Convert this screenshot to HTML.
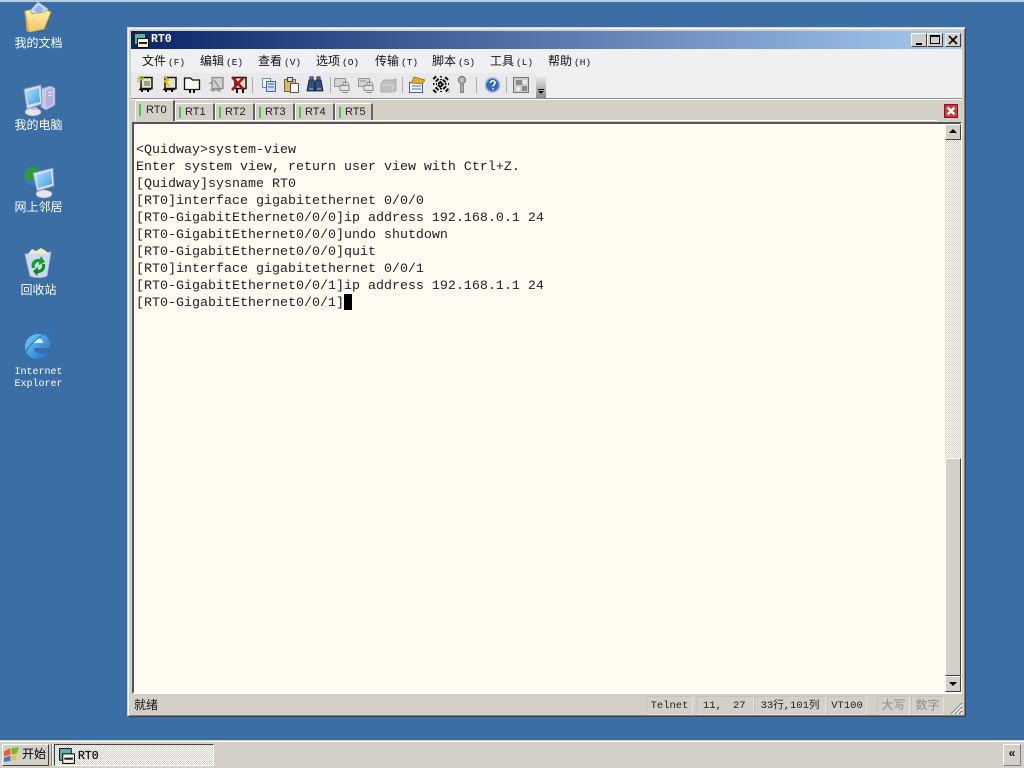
<!DOCTYPE html>
<html lang="zh"><head><meta charset="utf-8"><title>RT0</title>
<style>
*{box-sizing:border-box}
html,body{margin:0;padding:0;width:1024px;height:768px;overflow:hidden;background:#3a6ea5;font-family:"Liberation Sans","Noto Sans CJK SC",sans-serif;color:#000}
.a{position:absolute}
.dl{position:absolute;left:0;width:77px;text-align:center;color:#fff;font-size:12px;line-height:14px;white-space:nowrap}
.mono{font-family:"Liberation Mono","Noto Sans CJK SC",monospace}
.menu{position:absolute;top:53px;font-size:12px;line-height:16px;white-space:nowrap;color:#111}
.menu small{font-size:9.5px;font-family:"Liberation Mono",monospace;margin-left:2px}
.tab{position:absolute;top:103px;height:18px;width:40px;background:#d4d0c8;border-top:1px solid #fff;border-left:1px solid #fff;border-right:2px solid #666;font-size:11px;line-height:17px;padding-left:9px;color:#222}
.tab i{position:absolute;left:3px;top:3px;width:2px;height:11px;background:#4cc24c}
.term div{height:17px;white-space:pre}
.btn{position:absolute;width:16px;height:14px;background:#d4d0c8;border:1px solid;border-color:#fff #404040 #404040 #fff}
.st{position:absolute;top:696px;height:19px;border:1px solid;border-color:#c8c4bc #e4e2dc #e4e2dc #c8c4bc;font:10.5px/18px "Liberation Mono","Noto Sans CJK SC",monospace;white-space:nowrap;text-align:center;color:#222}
</style></head><body>
<svg width="0" height="0" class="a"><defs>
<linearGradient id="scr" x1="0" y1="0" x2="1" y2="1"><stop offset="0" stop-color="#b5e2fb"/><stop offset="1" stop-color="#3f9be8"/></linearGradient>
<linearGradient id="fol" x1="0" y1="0" x2="0" y2="1"><stop offset="0" stop-color="#fff0b0"/><stop offset="1" stop-color="#efc65c"/></linearGradient>
<linearGradient id="ie" x1="0" y1="0" x2="1" y2="1"><stop offset="0" stop-color="#74d0f6"/><stop offset="1" stop-color="#1b6cd0"/></linearGradient>
</defs></svg>
<div class="a" style="left:0;top:0;width:1024px;height:2px;background:#b9cbe2"></div>

<!-- desktop icons -->
<svg class="a" style="left:22px;top:1px" width="32" height="33" viewBox="0 0 32 33"><path d="M8 10 16 1l10 7-7 12z" fill="#c6dcf2" stroke="#9db4cc" stroke-width=".6"/><path d="M12 9l5-5 5 4-5 6z" fill="#8eb6e0"/><path d="M3 10l5-1 2 4 13-2 1-2 5 2-7 17-14 3-3-1z" fill="url(#fol)" stroke="#c8a448" stroke-width=".8"/><path d="M3 10l4 21" stroke="#d7ae48" stroke-width="1.500" fill="none"/></svg>
<div class="dl" style="top:36px">我的文档</div>
<svg class="a" style="left:22px;top:84px" width="34" height="33" viewBox="0 0 34 33"><path d="M19 5l9-3 5 2v17l-9 5-5-3z" fill="#c8cbea" stroke="#8f94c8" stroke-width=".7"/><path d="M24 6l7-2v16l-7 4z" fill="#aeb2dc"/><path d="M26 9l4-1M26 12l4-1" stroke="#eef" stroke-width="1"/><path d="M2 5 19 1l1 19-15 5z" fill="#dbe2f6" stroke="#8494c8"/><path d="M4 7l13-3 1 14-12 3z" fill="url(#scr)"/><ellipse cx="11" cy="28" rx="8" ry="4" fill="#e4e4f2" stroke="#9a9ac4" stroke-width=".6"/><path d="M9 24l6-1 1 3H9z" fill="#c4c6e4"/></svg>
<div class="dl" style="top:118px">我的电脑</div>
<svg class="a" style="left:22px;top:165px" width="34" height="34" viewBox="0 0 34 34"><circle cx="11" cy="11" r="9.500" fill="#2f7fbf"/><path d="M4 5c4-4 10-4 12-1l-3 9-6 4-5-5z" fill="#2f9a3a"/><path d="M11 8 31 3l1 18-17 5z" fill="#dbe2f6" stroke="#8494c8"/><path d="M14 10l15-4 1 13-14 4z" fill="url(#scr)"/><ellipse cx="22" cy="29" rx="8" ry="4" fill="#e4e4f2" stroke="#9a9ac4" stroke-width=".6"/></svg>
<div class="dl" style="top:200px">网上邻居</div>
<svg class="a" style="left:22px;top:247px" width="32" height="33" viewBox="0 0 32 33"><path d="M3 7 29 5l-4 24c-4 2-13 2-17 0z" fill="#cdd8f0" stroke="#aab6d4" stroke-width=".7"/><path d="M6 7l4-5 4 2 5-3 5 3 2 3z" fill="#efe8c8"/><path d="M10 21c-2-6 3-10 8-9l1-3 4 6-6 3v-3c-3 0-5 3-4 6z" fill="#14a02c"/><path d="M23 17c1 6-3 9-7 9l-1 3-4-5 5-4v3c3 0 5-3 4-6z" fill="#0c8a22"/></svg>
<div class="dl" style="top:283px">回收站</div>
<svg class="a" style="left:22px;top:329px" width="33" height="33" viewBox="0 0 33 33"><path d="M16 5c8-1 13 5 12 14H12c0 6 8 7 14 4-3 6-10 9-16 6C3 26 1 17 5 11c2-3 6-6 11-6z" fill="url(#ie)"/><path d="M12 14h9c0-6-9-6-9 0z" fill="#d4effd"/><path d="M3 28C1 22 14 8 27 3c4-1 5 1 3 6" fill="none" stroke="#2a78c8" stroke-width="1.200"/></svg>
<div class="dl mono" style="top:367px;font-size:10px;line-height:12px;color:#fff;font-family:'Liberation Mono',monospace">Internet<br>Explorer</div>

<!-- window -->
<div class="a" style="left:127px;top:27px;width:839px;height:690px;background:#d4d0c8;border:1px solid;border-color:#d4d0c8 #404040 #404040 #d4d0c8;box-shadow:inset 1px 1px 0 #fff,inset -1px -1px 0 #808080"></div>
<div class="a" style="left:131px;top:31px;width:831px;height:18px;background:linear-gradient(90deg,#0a246a,#a6caf0)"></div>
<svg class="a" style="left:134px;top:33px" width="15" height="15" viewBox="0 0 15 15"><rect x=".5" y=".5" width="11" height="11" fill="#5fb0b0" stroke="#222"/><rect x="3.500" y="5.500" width="11" height="9" fill="#f4f4e0" stroke="#111"/><rect x="5" y="9" width="8" height="2" fill="#222"/></svg>
<div class="a" style="left:151px;top:33px;font:bold 11.500px/14px 'Liberation Mono',monospace;color:#fff">RT0</div>
<div class="btn" style="left:911px;top:33px"><span class="a" style="left:4px;top:9px;width:6px;height:2px;background:#000"></span></div>
<div class="btn" style="left:927px;top:33px"><span class="a" style="left:2px;top:1px;width:10px;height:9px;border:1px solid #000;border-top-width:2px"></span></div>
<div class="btn" style="left:945px;top:33px"><svg class="a" style="left:2px;top:1px" width="10" height="10" viewBox="0 0 10 10"><path d="M1 1l8 8M9 1L1 9" stroke="#000" stroke-width="1.700"/></svg></div>

<!-- menu + toolbar -->
<div class="a" style="left:131px;top:49px;width:831px;height:50px;background:#f0f0f2"></div>
<div class="a" style="left:131px;top:98px;width:831px;height:2px;background:#8e8c88;border-bottom:1px solid #fff"></div>
<div class="a" style="left:131px;top:73px;width:405px;height:25px;background:#e9e9ec"></div>
<div class="a" style="left:536px;top:76px;width:10px;height:22px;background:linear-gradient(#ececec,#8a8a8a)"></div>
<div class="a" style="left:538px;top:89px;width:6px;height:1px;background:#000"></div>
<div class="a" style="left:538px;top:91px;border:3px solid transparent;border-bottom:0;border-top:3px solid #000"></div>
<div class="menu" style="left:142px">文件<small>(F)</small></div>
<div class="menu" style="left:200px">编辑<small>(E)</small></div>
<div class="menu" style="left:258px">查看<small>(V)</small></div>
<div class="menu" style="left:316px">选项<small>(O)</small></div>
<div class="menu" style="left:375px">传输<small>(T)</small></div>
<div class="menu" style="left:432px">脚本<small>(S)</small></div>
<div class="menu" style="left:490px">工具<small>(L)</small></div>
<div class="menu" style="left:548px">帮助<small>(H)</small></div>

<svg class="a" style="left:136px;top:75px" width="410" height="20" viewBox="0 0 410 20" fill="none">
<g><path d="M5 2.500h11v11H5z" fill="#e4e4cc" stroke="#111" stroke-width="1.500"/><path d="M1 6l4 1M3 1l3 4M7 1v4M1 3l4 2" stroke="#a8c828" stroke-width="1.300"/><path d="M3 14.500h12" stroke="#111" stroke-width="1.500"/><path d="M6 13v4M12 13v4" stroke="#111" stroke-width="2"/><path d="M8 6h6v5H8z" fill="#98a088"/></g>
<g transform="translate(24 0)"><path d="M5 2.500h11v11H5z" fill="#e4e4cc" stroke="#111" stroke-width="1.500"/><path d="M4 1l4 4-3 1 4 5" stroke="#d8c000" stroke-width="2"/><path d="M3 14.500h12" stroke="#111" stroke-width="1.500"/><path d="M6 13v4M12 13v4" stroke="#111" stroke-width="2"/></g>
<g transform="translate(47 0)"><path d="M1.500 3h6l2 2h7v9.500h-15z" fill="#fafaf4" stroke="#111" stroke-width="1.300"/><path d="M7 14v4M11 14v4" stroke="#111" stroke-width="2"/></g>
<g transform="translate(71 0)"><path d="M5 2.500h11v11H5z" fill="#d0d0d0" stroke="#8a8a8a" stroke-width="1.300"/><path d="M2 8h4M7 5l5 7M3 15h11M6 13v4M12 13v4" stroke="#8a8a8a" stroke-width="1.300"/></g>
<g transform="translate(94 0)"><path d="M5 2.500h11v11H5z" fill="#e4e4cc" stroke="#111" stroke-width="1.500"/><path d="M2 2l12 13M14 2 2 15" stroke="#b01010" stroke-width="2.600"/><path d="M7 14v4M13 14v4" stroke="#111" stroke-width="2"/></g>
<path d="M116.500 2v16M194.500 2v16M266.500 2v16M340.500 2v16M370.500 2v16" stroke="#b0b0b0"/>
<g transform="translate(125 0)"><path d="M1.500 3.500h8v9h-8z" fill="#fff" stroke="#6a88c4"/><path d="M5.500 6.500h9v10h-9z" fill="#c8dcf6" stroke="#4a68a8"/><path d="M7 9h6M7 12h6" stroke="#4a68a8"/></g>
<g transform="translate(147 0)"><path d="M1.500 4.500h11v12h-11z" fill="#dcb860" stroke="#7a6428"/><path d="M4.500 2.500h5v4h-5z" fill="#ddd" stroke="#444"/><path d="M7.500 8.500h8v9h-8z" fill="#fff" stroke="#556"/></g>
<g transform="translate(170 0)"><path d="M1 16 3 5h5l1 4v7zM9 16V9l1-4h5l2 11z" fill="#2c4f88" stroke="#111" stroke-width=".8"/><path d="M4 2h3v3H4zM11 2h3v3h-3z" fill="#6a9ad0" stroke="#224"/><path d="M3 14h4M11 14h4" stroke="#9cc0e8"/></g>
<g transform="translate(198 0)"><path d="M.5 3.500h11v8H.5z" fill="#d4d4d4" stroke="#999"/><path d="M6 10.500h9v5H6z" fill="#e4e4e4" stroke="#8d8d8d"/><path d="M8 10l2-3h3l2 3M8 17.500h6" stroke="#8d8d8d"/></g>
<g transform="translate(222 0)"><path d="M.5 3.500h11v8H.5z" fill="#d4d4d4" stroke="#999"/><path d="M6 10.500h9v5H6z" fill="#e4e4e4" stroke="#8d8d8d"/><path d="M8 10l2-3h3l2 3M8 17.500h6M2 6h6" stroke="#8d8d8d"/></g>
<g transform="translate(244 0)"><path d="M1 9l3-4h9l3-1v11l-2 2H1z" fill="#c0c0c0" stroke="#aaa"/><path d="M2 10h11v7" stroke="#d8d8d8"/></g>
<g transform="translate(272 0)"><path d="M1.500 7.500h13v10h-13z" fill="#f6f8fc" stroke="#4a6088"/><path d="M6 2l11 3-3 4-11-1z" fill="#dcae30" stroke="#8a6c18" stroke-width=".7"/><path d="M4 11h9M4 14h9" stroke="#5070a8"/></g>
<g transform="translate(296 0)"><path d="M2 17 16 2M2 2l15 15" stroke="#111" stroke-width="4" stroke-dasharray="2 1.500"/><path d="M1 9h4M13 9h4M9 1v4M9 13v4" stroke="#111" stroke-width="2" stroke-dasharray="1.500 1.500"/></g>
<g transform="translate(321 0)"><circle cx="5" cy="5" r="3.500" fill="#bcbcbc" stroke="#777" stroke-width="1.200"/><path d="M3.500 8.500h3v9h-3z" fill="#aaa" stroke="#888"/></g>
<g transform="translate(349 0)"><circle cx="7.500" cy="10" r="7" fill="#3268c4" stroke="#9cb4d8" stroke-width="1.500"/><path d="M5.500 8c0-3 4.500-3 4.500 0 0 2-2 2-2 3.500M8 13v1.500" stroke="#fff" stroke-width="1.600"/></g>
<g transform="translate(377 0)"><path d="M.5 2.500h15v15H.5z" fill="#ccc" stroke="#777"/><path d="M3 5h6v5H3zM9 11h5v5H9z" fill="#888"/><path d="M10 5h4v4h-4zM3 12h4v4H3z" fill="#e8e8e8"/></g>
</svg>

<!-- tabs -->
<div class="tab" style="left:135px;top:100px;width:40px;height:21px;line-height:19px;padding-left:10px;z-index:2;border-right:2px solid #555">RT0<i style="left:3px;top:3px;height:12px"></i></div>
<div class="tab" style="left:175px">RT1<i></i></div>
<div class="tab" style="left:215px">RT2<i></i></div>
<div class="tab" style="left:255px">RT3<i></i></div>
<div class="tab" style="left:295px">RT4<i></i></div>
<div class="tab" style="left:335px;width:38px">RT5<i></i></div>
<div class="a" style="left:175px;top:120px;width:762px;height:1px;background:#fff"></div>
<div class="a" style="left:944px;top:104px;width:14px;height:14px;background:#c83c42;border:1px solid #8a1216"><svg class="a" style="left:1px;top:1px" width="10" height="10" viewBox="0 0 10 10"><path d="M1.500 1.500l7 7M8.500 1.500l-7 7" stroke="#fff" stroke-width="2.400"/></svg></div>

<!-- terminal -->
<div class="a" style="left:132px;top:122px;width:830px;height:572px;background:#fffbf0;border:2px solid;border-color:#555 #fff #fff #555"></div>
<div class="a mono term" style="left:136px;top:142px;font-size:13.330px;line-height:17px;color:#222">
<div>&lt;Quidway&gt;system-view</div>
<div>Enter system view, return user view with Ctrl+Z.</div>
<div>[Quidway]sysname RT0</div>
<div>[RT0]interface gigabitethernet 0/0/0</div>
<div>[RT0-GigabitEthernet0/0/0]ip address 192.168.0.1 24</div>
<div>[RT0-GigabitEthernet0/0/0]undo shutdown</div>
<div>[RT0-GigabitEthernet0/0/0]quit</div>
<div>[RT0]interface gigabitethernet 0/0/1</div>
<div>[RT0-GigabitEthernet0/0/1]ip address 192.168.1.1 24</div>
<div>[RT0-GigabitEthernet0/0/1]</div>
</div>
<div class="a" style="left:344px;top:294px;width:8px;height:16px;background:#000"></div>

<!-- scrollbar -->
<div class="a" style="left:945px;top:124px;width:16px;height:568px;background:repeating-conic-gradient(#d4d0c8 0 25%,#fff 0 50%) 0 0/2px 2px"></div>
<div class="btn" style="left:945px;top:124px;height:16px"><span class="a" style="left:3px;top:4px;border:4px solid transparent;border-top:0;border-bottom:4px solid #000"></span></div>
<div class="a" style="left:945px;top:458px;width:16px;height:218px;background:#d4d0c8;border:1px solid;border-color:#fff #404040 #404040 #fff"></div>
<div class="btn" style="left:945px;top:676px;height:16px"><span class="a" style="left:3px;top:5px;border:4px solid transparent;border-bottom:0;border-top:4px solid #000"></span></div>

<!-- status bar -->
<div class="a" style="left:134px;top:697px;font-size:12px;line-height:17px;color:#111">就绪</div>
<div class="st" style="left:646px;width:47px">Telnet</div>
<div class="st" style="left:696px;width:58px"><span class="a" style="left:6px">11,</span><span class="a" style="left:36px">27</span></div>
<div class="st" style="left:754px;width:72px">33行,101列</div>
<div class="st" style="left:827px;width:40px">VT100</div>
<div class="st" style="left:877px;width:33px;color:#8f8d88;font-size:12px">大写</div>
<div class="st" style="left:911px;width:33px;color:#8f8d88;font-size:12px">数字</div>
<svg class="a" style="left:950px;top:702px" width="13" height="13" viewBox="0 0 13 13"><path d="M12 1 1 12M12 5l-7 7M12 9l-3 3" stroke="#808080" stroke-width="1.200"/><path d="M12 2.500 2.500 12M12 6.500 6.500 12M12 10.500 10.500 12" stroke="#fff"/></svg>

<!-- taskbar -->
<div class="a" style="left:0;top:740px;width:1024px;height:28px;background:#d4d0c8;border-top:1px solid #d4d0c8;box-shadow:inset 0 1px 0 #fff"></div>
<div class="a" style="left:2px;top:744px;width:47px;height:22px;background:#d4d0c8;border:1px solid;border-color:#fff #404040 #404040 #fff;font-size:12px;line-height:18px;padding-left:19px;color:#000">开始</div>
<svg class="a" style="left:3px;top:746px" width="17" height="17" viewBox="0 0 16 16"><path d="M1 5 7 2v6l-6 2z" fill="#e8602a"/><path d="M8 2l7-1-2 6-5 1z" fill="#76b82a"/><path d="M1 11l6-2v5l-6 1z" fill="#3a7ad8"/><path d="M8 9l5-1-1 5-4 1z" fill="#f2c42a"/></svg>
<div class="a" style="left:51px;top:744px;width:2px;height:22px;background:#fff;border-left:1px solid #808080"></div>
<div class="a" style="left:54px;top:744px;width:160px;height:22px;background:repeating-conic-gradient(#d4d0c8 0 25%,#fff 0 50%) 0 0/2px 2px;border:1px solid;border-color:#404040 #fff #fff #404040"></div>
<svg class="a" style="left:59px;top:748px" width="16" height="16" viewBox="0 0 15 15"><rect x=".5" y=".5" width="11" height="11" fill="#5fb0b0" stroke="#222"/><rect x="3.500" y="5.500" width="11" height="9" fill="#f4f4e0" stroke="#111"/><rect x="5" y="9" width="8" height="2" fill="#222"/></svg>
<div class="a" style="left:78px;top:750px;font:11.500px/13px 'Liberation Mono',monospace;color:#111;-webkit-text-stroke:.3px #111">RT0</div>
<div class="a" style="left:1003px;top:744px;width:18px;height:22px;border:1px solid;border-color:#fff #808080 #808080 #fff;font:bold 12px/18px 'Liberation Mono',monospace;text-align:center;color:#111">«</div>
</body></html>
